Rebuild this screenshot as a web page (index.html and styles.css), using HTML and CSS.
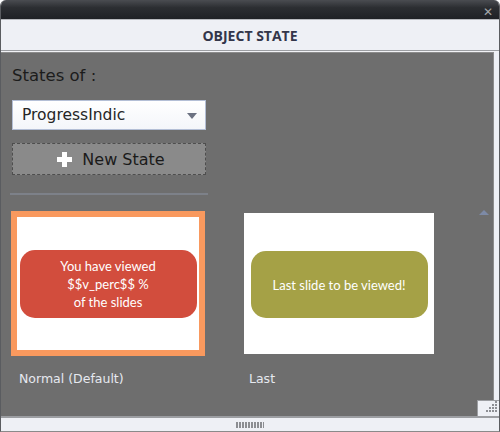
FILE: index.html
```html
<!DOCTYPE html>
<html>
<head>
<meta charset="utf-8">
<link rel="stylesheet" href="styles.css">
</head>
<body>
<div class="window">
  <div class="titlebar"><span class="close">✕</span></div>
  <div class="header">OBJECT STATE</div>
  <div class="body">
    <div class="content">
      <div class="states-label">States of :</div>
      <div class="select">
        <span class="select-text">ProgressIndic</span>
        <span class="select-arrow"></span>
      </div>
      <div class="new-state"><span class="plus"></span><span>New State</span></div>
      <div class="separator"></div>
      <div class="thumbs">
        <div class="thumb">
          <div class="slide selected">
            <div class="pill red">You have viewed<br>$$v_perc$$ %<br>of the slides</div>
          </div>
          <div class="thumb-label">Normal (Default)</div>
        </div>
        <div class="thumb second">
          <div class="slide">
            <div class="pill olive">Last slide to be viewed!</div>
          </div>
          <div class="thumb-label">Last</div>
        </div>
      </div>
    </div>
    <div class="scrollbar"><span class="scroll-up"></span></div>
    <div class="grip">
      <svg width="14" height="14" viewBox="0 0 14 14">
        <g fill="#8d8f94">
          <rect x="11" y="0" width="2" height="2"/>
          <rect x="8" y="3" width="2" height="2"/><rect x="11" y="3" width="2" height="2"/>
          <rect x="5" y="6" width="2" height="2"/><rect x="8" y="6" width="2" height="2"/><rect x="11" y="6" width="2" height="2"/>
          <rect x="2" y="9" width="2" height="2"/><rect x="5" y="9" width="2" height="2"/><rect x="8" y="9" width="2" height="2"/><rect x="11" y="9" width="2" height="2"/>
        </g>
      </svg>
    </div>
  </div>
  <div class="footer"><span class="handle"></span></div>
</div>
</body>
</html>
```
FILE: styles.css
```css
html, body {
  margin: 0;
  padding: 0;
  background: #ffffff;
}
.window {
  width: 500px;
  height: 432px;
  display: flex;
  flex-direction: column;
  background: #eef0f4;
  font-family: "DejaVu Sans", "Open Sans", sans-serif;
  box-sizing: border-box;
  border-left: 1px solid #5a5c60;
  border-right: 1px solid #5a5c60;
  border-bottom: 1px solid #8a8a8a;
  border-radius: 6px 6px 0 0;
  overflow: hidden;
}
.titlebar {
  height: 19px;
  background: linear-gradient(#4a4c51, #2c2e32 40%, #1f2125);
  display: flex;
  justify-content: flex-end;
  align-items: flex-end;
  padding-right: 6px;
  flex: none;
}
.close {
  color: #a4a6aa;
  font-size: 12px;
  font-weight: bold;
  line-height: 13px;
  font-family: "DejaVu Sans", sans-serif;
}
.header {
  height: 30px;
  flex: none;
  display: flex;
  align-items: center;
  justify-content: center;
  background: #eef0f5;
  border-top: 1px solid #b8babe;
  border-bottom: 1px solid #9c9ea2;
  font-family: "Open Sans", sans-serif;
  font-weight: bold;
  font-size: 14px;
  color: #33364a;
}
.body {
  flex: 1;
  display: flex;
  border-top: 1px solid #f2f3f6;
  border-bottom: 1px solid #9c9ea2;
  min-height: 0;
  position: relative;
}
.content {
  flex: 1;
  background: #6e6e6e;
  padding: 13px 0 0 10px;
  border-top: 1px solid #8c8c8c;
  min-width: 0;
}
.states-label {
  font-size: 16.5px;
  color: #1c1c1c;
  line-height: 20px;
  margin-left: 1px;
}
.select {
  margin-top: 14px;
  margin-left: 1px;
  width: 194px;
  height: 30px;
  box-sizing: border-box;
  border: 1px solid #b4bfd6;
  background: linear-gradient(#ffffff, #f4f6fa);
  display: flex;
  align-items: center;
  justify-content: space-between;
  padding: 0 8px 0 9px;
}
.select-text {
  font-size: 15.5px;
  color: #262626;
}
.select-arrow {
  width: 0;
  height: 0;
  border-left: 5px solid transparent;
  border-right: 5px solid transparent;
  border-top: 6px solid #6c7282;
  margin-top: 2px;
}
.new-state {
  margin-top: 13px;
  margin-left: 1px;
  width: 194px;
  height: 32px;
  box-sizing: border-box;
  border: 1px dashed #4e4e4e;
  background: #8a8a8a;
  display: flex;
  align-items: center;
  justify-content: center;
  gap: 10px;
  font-size: 16px;
  color: #1a1a1a;
  padding-left: 4px;
}
.plus {
  width: 15px;
  height: 15px;
  position: relative;
}
.plus::before, .plus::after {
  content: "";
  position: absolute;
  background: #ffffff;
}
.plus::before {
  left: 5px;
  top: 0;
  width: 5px;
  height: 15px;
}
.plus::after {
  left: 0;
  top: 5px;
  width: 15px;
  height: 5px;
}
.separator {
  margin-top: 18px;
  margin-left: -1px;
  width: 198px;
  height: 2px;
  background: #7d8189;
}
.thumbs {
  display: flex;
  gap: 38px;
  margin-top: 16px;
}
.thumb-label {
  margin-top: 14px;
  margin-left: 8px;
  font-size: 12.5px;
  color: #e6e9f0;
  line-height: 18px;
}
.second .thumb-label {
  margin-left: 6px;
  margin-top: 16px;
}
.slide {
  background: #ffffff;
  width: 190px;
  height: 141px;
  box-sizing: border-box;
  display: flex;
  align-items: center;
  justify-content: center;
  margin-top: 2px;
}
.slide.selected {
  width: 194px;
  height: 145px;
  margin-top: 0;
  border: 6px solid #f9995e;
  padding-top: 0;
}
.second .slide {
  margin-left: 1px;
}
.pill {
  color: #ffffff;
  font-family: "Lato", "Open Sans", sans-serif;
  font-size: 13px;
  line-height: 18px;
  text-align: center;
  display: flex;
  align-items: center;
  justify-content: center;
  border-radius: 15px;
}
.red {
  width: 177px;
  height: 68px;
  background: #d24d3d;
}
.olive {
  width: 177px;
  height: 67px;
  background: #a5a146;
  margin-top: 2px;
}
.scrollbar {
  width: 5px;
  flex: none;
  background: #eef0f5;
  border-left: 1px solid #8c8c8c;
}
.scroll-up {
  position: absolute;
  right: 10px;
  top: 158px;
  width: 0;
  height: 0;
  border-left: 5px solid transparent;
  border-right: 5px solid transparent;
  border-bottom: 5px solid #7d8aa6;
}
.grip {
  position: absolute;
  right: 0;
  bottom: 0;
  width: 22px;
  height: 16px;
  background: #eef0f5;
  display: flex;
  align-items: flex-end;
  justify-content: flex-end;
  padding: 0 1px 1px 0;
  box-sizing: border-box;
  border-top: 1px solid #9c9ea2;
  border-left: 1px solid #9c9ea2;
}
.footer {
  flex: none;
  height: 13px;
  background: #eef0f5;
  border-top: 1px solid #9c9ea2;
  display: flex;
  align-items: center;
  justify-content: center;
}
.handle {
  width: 28px;
  height: 6px;
  background: repeating-linear-gradient(to right, #8c8e92 0, #8c8e92 2px, transparent 2px, transparent 3px);
}
```
